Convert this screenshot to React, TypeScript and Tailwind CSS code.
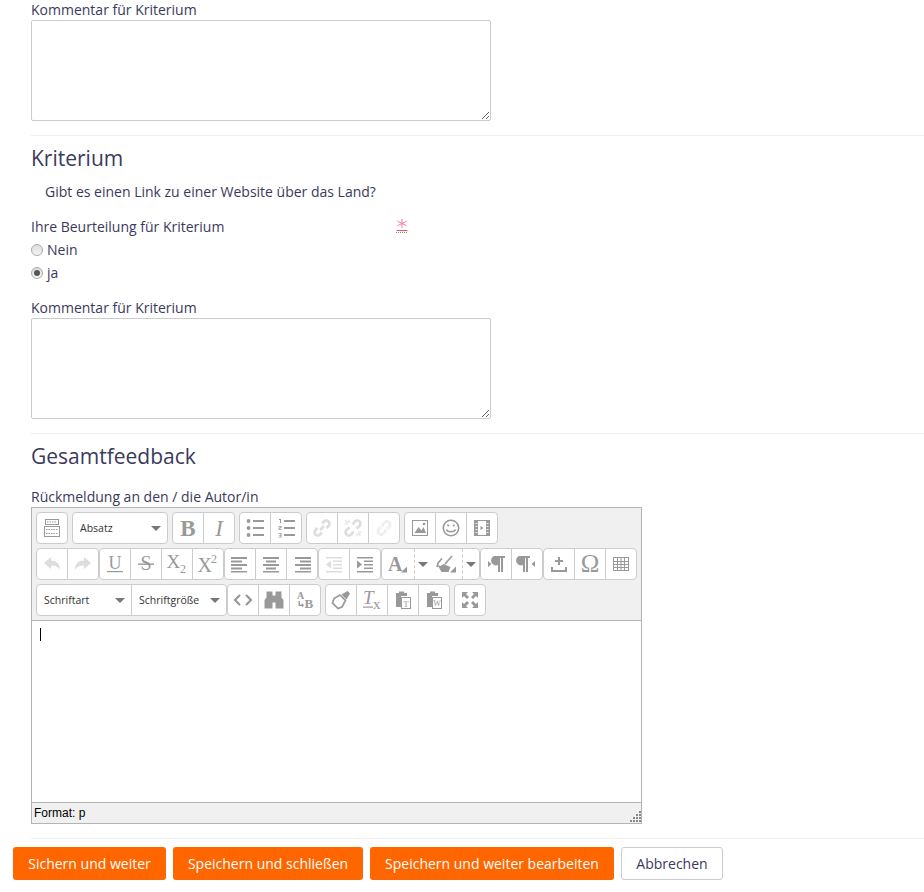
import React from "react";

const C = "#999";
const L = "#ddd";

function Svg({ children }: { children: React.ReactNode }) {
  return <svg width="20" height="20" viewBox="0 0 20 20" className="block overflow-visible">{children}</svg>;
}

const icons: Record<string, (c: string) => React.ReactNode> = {
  kitchen: (c) => (
    <g fill="none" stroke={c}>
      <rect x="3.5" y="1.5" width="13" height="5" />
      <rect x="2.5" y="8.5" width="15" height="10" />
      <path d="M5 4h10M4 11.500h12M4 15.500h12" strokeDasharray="1.5 1" />
    </g>
  ),
  bold: (c) => <text x="10" y="17.500" textAnchor="middle" fontFamily="Liberation Serif" fontWeight="700" fontSize="23" fill={c}>B</text>,
  italic: (c) => <text x="10" y="17.500" textAnchor="middle" fontFamily="Liberation Serif" fontStyle="italic" fontSize="23" fill={c}>I</text>,
  ul: (c) => (
    <g fill={c}>
      <circle cx="3.500" cy="3" r="1.900" /><circle cx="3.500" cy="10" r="1.900" /><circle cx="3.500" cy="17" r="1.900" />
      <path d="M8 2h11v2H8zM8 9h11v2H8zM8 16h11v2H8z" />
    </g>
  ),
  ol: (c) => (
    <g fill={c}>
      <path d="M3 1h2v4H4V2H3zM2.500 8h3v2.200h-2v.8h2v.7h-3V9.500h2v-.8h-2zM2.500 15h3v4.500h-3v-.7h2v-1.100H3.200v-.6h1.300v-1.400h-2z" />
      <path d="M8 2h11v2H8zM8 9h11v2H8zM8 16h11v2H8z" />
    </g>
  ),
  link: (c) => (
    <g fill="none" stroke={c} strokeWidth="2.600">
      <path d="M8 12l4-4" />
      <path d="M10 5.500l2-2a3 3 0 0 1 4.500 4.500l-2 2" />
      <path d="M10 14.500l-2 2a3 3 0 0 1-4.500-4.500l2-2" />
    </g>
  ),
  unlink: (c) => (
    <g fill="none" stroke={c} strokeWidth="2.600">
      <path d="M9.500 6.500l2.500-3a3 3 0 0 1 4.500 4.500l-3 2.500" />
      <path d="M10.500 13.500l-2.500 3a3 3 0 0 1-4.500-4.500l3-2.500" />
      <path d="M1.500 6h3.500M6 1.500V5M18.500 14H15M14 18.500V15M2.500 2.500l2 2M17.500 17.500l-2-2" strokeWidth="1.100" />
    </g>
  ),
  anchor: (c) => (
    <g fill="none" stroke={c} strokeWidth="2.600">
      <path d="M8 8l2-3 3-2 3 2 0 3-3 3" />
      <path d="M12 12l-2 3-3 2-3-2 0-3 3-3" />
    </g>
  ),
  image: (c) => (
    <g>
      <rect x="2.500" y="2.500" width="15" height="15" fill="none" stroke={c} />
      <path d="M4.500 15l4-6 3 3.500 2-3.500 2.500 6z" fill={c} />
      <circle cx="14" cy="6" r="1.300" fill={c} />
    </g>
  ),
  smile: (c) => (
    <g fill="none" stroke={c} strokeWidth="1.600">
      <circle cx="10" cy="10" r="7.700" />
      <path d="M5.500 11.500c1 3 8 3 9 0" />
      <circle cx="7.200" cy="7.500" r="1.100" fill={c} stroke="none" />
      <circle cx="12.800" cy="7.500" r="1.100" fill={c} stroke="none" />
    </g>
  ),
  media: (c) => (
    <g>
      <rect x="2.500" y="2.500" width="15" height="15" fill="none" stroke={c} />
      <path d="M3 3h3v14H3zM14 3h3v14h-3z" fill={c} />
      <path d="M3.500 5.500h2M3.500 8.500h2M3.500 11.500h2M3.500 14.500h2M14.500 5.500h2M14.500 8.500h2M14.500 11.500h2M14.500 14.500h2" stroke="#f0f0f0" />
      <path d="M8.500 8l3 2-3 2z" fill={c} />
    </g>
  ),
  undo: (c) => <path d="M2 9l7-6v3.600c5 0 9 3 9 9.400-2-3.500-5-4.400-9-4.400V15z" fill={c} />,
  redo: (c) => <path d="M18 9l-7-6v3.600c-5 0-9 3-9 9.400 2-3.500 5-4.400 9-4.400V15z" fill={c} />,
  underline: (c) => (
    <g>
      <text x="10" y="14.500" textAnchor="middle" fontFamily="Liberation Serif" fontSize="18" fill={c}>U</text>
      <rect x="2" y="17" width="16" height="1.200" fill={c} />
    </g>
  ),
  strike: (c) => (
    <g>
      <text x="10" y="16" textAnchor="middle" fontFamily="Liberation Serif" fontSize="20" fill={c}>S</text>
      <rect x="2" y="9.500" width="16" height="1.400" fill={c} />
    </g>
  ),
  sub: (c) => (
    <g fill={c} fontFamily="Liberation Serif">
      <text x="-0.500" y="14" fontSize="19">X</text>
      <text x="13" y="18.500" fontSize="12">2</text>
    </g>
  ),
  sup: (c) => (
    <g fill={c} fontFamily="Liberation Serif">
      <text x="-0.500" y="18" fontSize="20">X</text>
      <text x="13" y="9" fontSize="12">2</text>
    </g>
  ),
  left: (c) => <path d="M1 3h16v2H1zM1 6.500h11v2H1zM1 10h16v2H1zM1 13.500h11v2H1zM1 17h16v1.500H1z" fill={c} />,
  center: (c) => <path d="M2 3h16v2H2zM5 6.500h10v2H5zM2 10h16v2H2zM5 13.500h10v2H5zM2 17h16v1.500H2z" fill={c} />,
  right: (c) => <path d="M3 3h16v2H3zM8 6.500h11v2H8zM3 10h16v2H3zM8 13.500h11v2H8zM3 17h16v1.500H3z" fill={c} />,
  outdent: (c) => <path d="M2 3h16v1.500H2zM9 6.500h9V8H9zM9 10h9v1.500H9zM9 13.500h9V15H9zM2 17h16v1.500H2zM7 6.500v8l-5-4z" fill={c} />,
  indent: (c) => <path d="M2 3h16v1.500H2zM9 6.500h9V8H9zM9 10h9v1.500H9zM9 13.500h9V15H9zM2 17h16v1.500H2zM2 6.500v8l5-4z" fill={c} />,
  fore: (c) => (
    <g fill={c}>
      <text x="0" y="17" fontFamily="Liberation Serif" fontWeight="700" fontSize="20">A</text>
      <path d="M19 12.500v6h-6z" />
    </g>
  ),
  back: (c) => (
    <g fill={c}>
      <path d="M6 4.500L2 9l-1 4M16 2L9 10" fill="none" stroke={c} strokeWidth="1.600" />
      <path d="M1.500 11l4 7h7l2-5-7-3-3 2z" />
      <path d="M20 12.500v6h-6z" />
    </g>
  ),
  ltr: (c) => <path d="M8 2h11v2h-2v14h-2V4h-1v14h-2v-7a4.500 4.500 0 0 1-4-9zM2 7l3.500 3L2 13z" fill={c} />,
  rtl: (c) => <path d="M2 2h11v2h-2v14H9V4H8v14H6v-7a4.500 4.500 0 0 1-4-9zM18 7l-3.500 3 3.500 3z" fill={c} />,
  insert: (c) => <path d="M9 3h2v3h3v2h-3v3H9V8H6V6h3zM2 13h2v3h12v-3h2v5H2z" fill={c} />,
  omega: (c) => <text x="10" y="18" textAnchor="middle" fontFamily="Liberation Serif" fontSize="25" fill={c}>Ω</text>,
  table: (c) => (
    <g fill="none" stroke={c}>
      <rect x="2.500" y="3.500" width="15" height="13" />
      <path d="M2.500 7.500h15M2.500 10.500h15M2.500 13.500h15M6.500 3.500v13M10 3.500v13M13.500 3.500v13" />
    </g>
  ),
  code: (c) => <path d="M7 5L2 10l5 5M13 5l5 5-5 5" fill="none" stroke={c} strokeWidth="2.200" />,
  find: (c) => <path d="M2.500 1.500h6v4h3v-4h6v6l2 2.500v8.500h-8v-6h-3v6h-8V10l2-2.500z" fill={c} />,
  replace: (c) => (
    <g fill={c} fontFamily="Liberation Serif" fontWeight="700">
      <text x="2" y="9" fontSize="10">A</text>
      <text x="9.500" y="18" fontSize="13">B</text>
      <path d="M3.500 11h1.500v3.500H7V13l2 2.300-2 2.200v-1.500H3.500z" />
    </g>
  ),
  brush: (c) => (
    <g>
      <path d="M9 5l5.500 5.500-3.500 6.500-4 1.500L1.500 13 3 8.500z" fill="none" stroke={c} strokeWidth="1.700" />
      <path d="M10.500 4.500l6-3.500 2.500 2.500-3.500 6z" fill={c} />
    </g>
  ),
  clear: (c) => (
    <g fill={c} fontFamily="Liberation Serif" fontStyle="italic">
      <text x="1" y="14" fontSize="19">T</text>
      <text x="11" y="18.500" fontSize="15" fontStyle="normal">x</text>
      <rect x="1" y="16.500" width="10" height="1.200" />
    </g>
  ),
  pasteT: (c) => (
    <g>
      <path d="M3 3h3V1.500h5V3h3v3H8v11H3z" fill={c} />
      <rect x="8.500" y="7.500" width="9" height="11" fill="#fff" stroke={c} />
      <text x="13" y="16.500" textAnchor="middle" fontFamily="Liberation Serif" fontSize="9" fill={c}>T</text>
    </g>
  ),
  pasteW: (c) => (
    <g>
      <path d="M3 3h3V1.500h5V3h3v3H8v11H3z" fill={c} />
      <rect x="8.500" y="7.500" width="9" height="11" fill="#fff" stroke={c} />
      <text x="13" y="16" textAnchor="middle" fontFamily="Liberation Serif" fontSize="8" fill={c}>W</text>
    </g>
  ),
  full: (c) => <path d="M2 2h6L6 4l3 3-2 2-3-3-2 2zM18 2v6l-2-2-3 3-2-2 3-3-2-2zM2 18v-6l2 2 3-3 2 2-3 3 2 2zM18 18h-6l2-2-3-3 2-2 3 3 2-2z" fill={c} />,
};

function IconBtn({ name, color }: { name: string; color: string }) {
  return (
    <div className="w-[31px] last:w-[30px] h-[30px] flex items-center justify-center border-r border-[#ccc] last:border-r-0">
      <Svg>{icons[name](color)}</Svg>
    </div>
  );
}

function Group({ items, off, faint }: { items: string[]; off?: string[]; faint?: string[] }) {
  return (
    <div className="flex h-8 bg-white border border-[#ccc] rounded-[4px]">
      {items.map((n) => (
        <IconBtn key={n} name={n} color={faint?.includes(n) ? "#eee" : off?.includes(n) ? L : C} />
      ))}
    </div>
  );
}

function Caret() {
  return <span className="w-0 h-0 border-x-[5px] border-x-transparent border-t-[5px] border-t-[#777] shrink-0" />;
}

function Sel({ label, w, cls = "" }: { label: string; w: string; cls?: string }) {
  return (
    <div className={`${w} ${cls} h-[30px] flex items-center justify-between pl-[7px] pr-[6px] text-[10.5px] text-[#333]`}>
      <span>{label}</span>
      <Caret />
    </div>
  );
}

function Split({ name }: { name: string }) {
  return (
    <div className="flex items-center h-[30px] w-[49px] first:w-[48px]">
      <div className="w-[33px] h-full flex items-center justify-center border-r border-dashed border-[#ccc]">
        <Svg>{icons[name](C)}</Svg>
      </div>
      <div className="flex-1 flex justify-center"><Caret /></div>
    </div>
  );
}

function Radio({ on }: { on?: boolean }) {
  return (
    <span className="w-3 h-3 rounded-full border border-[#aaa] bg-gradient-to-b from-[#dcdcdc] to-[#f6f6f6] flex items-center justify-center shrink-0">
      {on && <span className="w-1.5 h-1.5 rounded-full bg-[#555]" />}
    </span>
  );
}

function Area() {
  return <textarea className="block w-[460px] h-[101px] border border-[#ccc] rounded-[2px] bg-white" />;
}

function Hr() {
  return <div className="h-px bg-[#eee]" />;
}

function Btn({ children, w }: { children: React.ReactNode; w: string }) {
  return (
    <button className={`${w} h-[33px] bg-[#f60] text-white rounded-[3px] text-center`}>{children}</button>
  );
}

export default function App() {
  return (
    <div className="w-[924px] h-[892px] overflow-hidden bg-white text-[14px] leading-5 text-[#3a3a5c]" style={{ fontFamily: "'Open Sans', sans-serif" }}>
      <div className="pl-[31px]">
        <div className="h-5">Kommentar für Kriterium</div>
        <Area />
        <div className="mt-[14px]"><Hr /></div>
        <h3 className="mt-[10px] text-[21px] leading-[24px]">Kriterium</h3>
        <div className="mt-[12px] pl-[14px]">Gibt es einen Link zu einer Website über das Land?</div>
        <div className="mt-[15px] flex w-[377px] justify-between items-start">
          <span>Ihre Beurteilung für Kriterium</span>
          <svg width="12" height="16" viewBox="0 0 12 16" className="mt-[1px] block">
            <path d="M6 1v9M1.500 3.200l9 4.600M10.500 3.200l-9 4.600" stroke="#f47ba8" strokeWidth="1" fill="none" />
            <path d="M0.500 12.500h11" stroke="#ee5566" />
            <path d="M0 14.500h12" stroke="#888" strokeDasharray="1 1" />
          </svg>
        </div>
        <label className="mt-[1px] flex items-center gap-[4px] h-[23px]"><Radio />Nein</label>
        <label className="flex items-center gap-[4px] h-[23px]"><Radio on />ja</label>
        <div className="mt-[14px]">Kommentar für Kriterium</div>
        <Area />
        <div className="mt-[14px]"><Hr /></div>
        <h3 className="mt-[9px] text-[21px] leading-[26px]">Gesamtfeedback</h3>
        <div className="mt-[18px]">Rückmeldung an den / die Autor/in</div>
        <div className="w-[611px] border border-[#b4b4b4]">
          <div className="bg-[#f0f0f0] h-[113px] pt-1 pl-1 border-b border-[#b4b4b4] flex flex-col gap-1">
            <div className="flex gap-1">
              <Group items={["kitchen"]} />
              <div className="bg-white border border-[#ccc] rounded-[4px] h-8"><Sel label="Absatz" w="w-[94px]" /></div>
              <Group items={["bold", "italic"]} />
              <Group items={["ul", "ol"]} />
              <Group items={["link", "unlink", "anchor"]} off={["link", "unlink"]} faint={["anchor"]} />
              <Group items={["image", "smile", "media"]} />
            </div>
            <div className="flex">
              <Group items={["undo", "redo"]} off={["undo", "redo"]} />
              <Group items={["underline", "strike", "sub", "sup"]} />
              <Group items={["left", "center", "right"]} />
              <Group items={["outdent", "indent"]} off={["outdent"]} />
              <div className="flex h-8 bg-white border border-[#ccc] rounded-[4px]">
                <Split name="fore" />
                <Split name="back" />
              </div>
              <Group items={["ltr", "rtl"]} />
              <Group items={["insert", "omega", "table"]} />
            </div>
            <div className="flex">
              <div className="flex h-8 bg-white border border-[#ccc] rounded-[4px]">
                <Sel label="Schriftart" w="w-[95px]" cls="border-r border-[#ccc]" />
                <Sel label="Schriftgröße" w="w-[94px]" />
              </div>
              <Group items={["code", "find", "replace"]} />
              <div className="w-1" />
              <Group items={["brush", "clear", "pasteT", "pasteW"]} />
              <div className="w-1" />
              <Group items={["full"]} />
            </div>
          </div>
          <div className="h-[181px] pl-2 pt-[7px] bg-white">
            <div className="w-px h-[13px] bg-black" />
          </div>
          <div className="relative h-[21px] bg-[#f0f0f0] border-t border-[#b4b4b4] pl-[2px] text-[12px] leading-[20px] text-black" style={{ fontFamily: "'Liberation Sans', sans-serif" }}>
            Format: p
            <svg width="14" height="14" viewBox="0 0 14 14" className="absolute right-0 bottom-0">
              <g fill="#888">
                <rect x="12" y="2" width="2" height="2" /><rect x="9" y="5" width="2" height="2" /><rect x="12" y="5" width="2" height="2" />
                <rect x="6" y="8" width="2" height="2" /><rect x="9" y="8" width="2" height="2" /><rect x="12" y="8" width="2" height="2" />
                <rect x="3" y="11" width="2" height="2" /><rect x="6" y="11" width="2" height="2" /><rect x="9" y="11" width="2" height="2" /><rect x="12" y="11" width="2" height="2" />
              </g>
            </svg>
          </div>
        </div>
        <div className="mt-[14px]"><Hr /></div>
      </div>
      <div className="mt-2 pl-[13px] flex gap-[7px]">
        <Btn w="w-[153px]">Sichern und weiter</Btn>
        <Btn w="w-[190px]">Speichern und schließen</Btn>
        <Btn w="w-[244px]">Speichern und weiter bearbeiten</Btn>
        <button className="w-[102px] h-[33px] bg-white border border-[#ccc] rounded-[3px]">Abbrechen</button>
      </div>
    </div>
  );
}
